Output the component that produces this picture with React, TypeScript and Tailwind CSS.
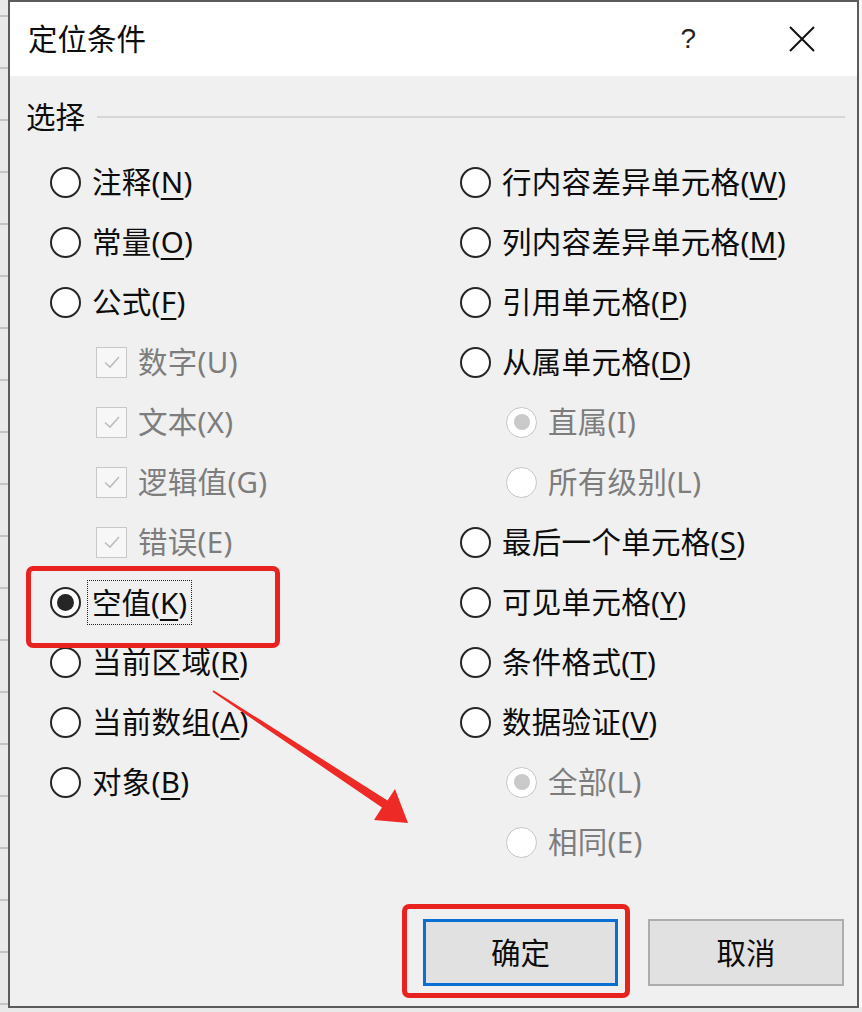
import React from 'react';

type Row = {
  kind: 'radio' | 'check' | 'sub';
  t: string;
  k: string;
  checked?: boolean;
  focus?: boolean;
};

const left: Row[] = [
  { kind: 'radio', t: '注释', k: 'N' },
  { kind: 'radio', t: '常量', k: 'O' },
  { kind: 'radio', t: '公式', k: 'F' },
  { kind: 'check', t: '数字', k: 'U' },
  { kind: 'check', t: '文本', k: 'X' },
  { kind: 'check', t: '逻辑值', k: 'G' },
  { kind: 'check', t: '错误', k: 'E' },
  { kind: 'radio', t: '空值', k: 'K', checked: true, focus: true },
  { kind: 'radio', t: '当前区域', k: 'R' },
  { kind: 'radio', t: '当前数组', k: 'A' },
  { kind: 'radio', t: '对象', k: 'B' },
];

const right: Row[] = [
  { kind: 'radio', t: '行内容差异单元格', k: 'W' },
  { kind: 'radio', t: '列内容差异单元格', k: 'M' },
  { kind: 'radio', t: '引用单元格', k: 'P' },
  { kind: 'radio', t: '从属单元格', k: 'D' },
  { kind: 'sub', t: '直属', k: 'I', checked: true },
  { kind: 'sub', t: '所有级别', k: 'L' },
  { kind: 'radio', t: '最后一个单元格', k: 'S' },
  { kind: 'radio', t: '可见单元格', k: 'Y' },
  { kind: 'radio', t: '条件格式', k: 'T' },
  { kind: 'radio', t: '数据验证', k: 'V' },
  { kind: 'sub', t: '全部', k: 'L', checked: true },
  { kind: 'sub', t: '相同', k: 'E' },
];

function RadioCircle({ checked, disabled }: { checked?: boolean; disabled?: boolean }) {
  return (
    <div
      className={
        disabled
          ? 'w-[31px] h-[31px] shrink-0 rounded-full border-[1.5px] border-[#c6c6c6] bg-white flex items-center justify-center'
          : 'w-[31px] h-[31px] shrink-0 rounded-full border-2 border-[#262626] bg-white flex items-center justify-center'
      }
    >
      {checked && (
        <div
          className={
            disabled
              ? 'w-[16px] h-[16px] rounded-full bg-[#c9c9c9]'
              : 'w-[17px] h-[17px] rounded-full bg-[#262626]'
          }
        />
      )}
    </div>
  );
}

function CheckBox() {
  return (
    <div className="w-[31px] h-[31px] shrink-0 border-[1.5px] border-[#c8c8c8] bg-[#f7f7f7] flex items-center justify-center">
      <svg width="22" height="22" viewBox="0 0 22 22">
        <path d="M4 11.5 L9 16 L18 6" fill="none" stroke="#bdbdbd" strokeWidth="1.6" />
      </svg>
    </div>
  );
}

function Item({ r }: { r: Row }) {
  const disabled = r.kind !== 'radio';
  const label = (
    <span className={disabled ? 'text-[#7d7d7d]' : 'text-[#0d0d0d]'}>
      {r.t}(
      {disabled ? r.k : <span className="underline underline-offset-[5px] decoration-[1.5px]">{r.k}</span>})
    </span>
  );
  return (
    <div className={'h-[60px] flex items-center ' + (disabled ? 'pl-[46px]' : '')}>
      {r.kind === 'check' ? <CheckBox /> : <RadioCircle checked={r.checked} disabled={disabled} />}
      {r.focus ? (
        <span className="ml-[6px] px-[4px] py-[4px] border border-dotted border-[#222] leading-[35px]">{label}</span>
      ) : (
        <span className={disabled ? 'ml-[11px] tracking-[0.3px]' : 'ml-[11px] tracking-[0.3px]'}>{label}</span>
      )}
    </div>
  );
}

export default function App() {
  return (
    <div
      className="relative w-[862px] h-[1012px] overflow-hidden bg-[#e9e9e9] bg-[repeating-linear-gradient(to_bottom,transparent_0px,transparent_15px,#c4c4c4_15px,#c4c4c4_17px,transparent_17px,transparent_52px)] font-['Noto_Sans','Noto_Sans_CJK_SC',sans-serif] text-[29.5px] leading-none"
    >
      <div className="flex h-[1008px]">
        <div className="w-[8px] shrink-0" />
        {/* dialog */}
        <div className="w-[851px] h-[1008px] flex flex-col border-2 border-[#5b5b5b] bg-[#f0f0f0]">
          {/* title bar */}
          <div className="h-[74px] shrink-0 bg-white flex items-center pl-[18px]">
            <span className="text-[#0d0d0d]">定位条件</span>
            <div className="flex-1" />
            <span className="text-[#222] text-[28px] mr-[93px] font-['Liberation_Sans',sans-serif]">?</span>
            <svg width="26" height="26" viewBox="0 0 26 26" className="mr-[42px]">
              <path d="M1 1 L25 25 M25 1 L1 25" stroke="#111" strokeWidth="2" />
            </svg>
          </div>
          {/* body */}
          <div className="flex-1 flex flex-col pt-[11px]">
            <div className="h-[60px] flex items-center pl-[16px] pr-[12px]">
              <span className="text-[#0d0d0d]">选择</span>
              <div className="flex-1 ml-[12px] h-[1.5px] bg-[#d6d6d6]" />
            </div>
            <div className="mt-[5px] flex pl-[40px]">
              <div className="w-[410px] flex flex-col">
                {left.map((r, i) => (
                  <Item key={i} r={r} />
                ))}
              </div>
              <div className="flex-1 flex flex-col">
                {right.map((r, i) => (
                  <Item key={i} r={r} />
                ))}
              </div>
            </div>
            <div className="flex-1" />
            <div className="flex justify-end gap-[30px] pr-[13px] pb-[20px]">
              <div className="w-[195px] h-[67px] bg-[#e1e1e1] border-[3px] border-[#0a6fd3] flex items-center justify-center text-[#0d0d0d]">
                确定
              </div>
              <div className="w-[196px] h-[67px] bg-[#e1e1e1] border-2 border-[#adadad] flex items-center justify-center text-[#0d0d0d]">
                取消
              </div>
            </div>
          </div>
        </div>
        <div className="flex-1 bg-[#f7f7f7]" />
      </div>

      {/* annotations */}
      <div className="absolute left-[26px] top-[566px] w-[254px] h-[82px] border-[5px] border-[#e8221f] rounded-[7px]" />
      <div className="absolute left-[402px] top-[904px] w-[228px] h-[94px] border-[5px] border-[#e8221f] rounded-[7px]" />
      <svg className="absolute left-0 top-0 pointer-events-none" width="862" height="1012" viewBox="0 0 862 1012">
        <path
          d="M213.5 690.2 L387.5 800.5 L395 789 L408 823 L374 820 L382 807.5 L212.5 691.8 Z"
          fill="#ee2a26"
        />
      </svg>
    </div>
  );
}
